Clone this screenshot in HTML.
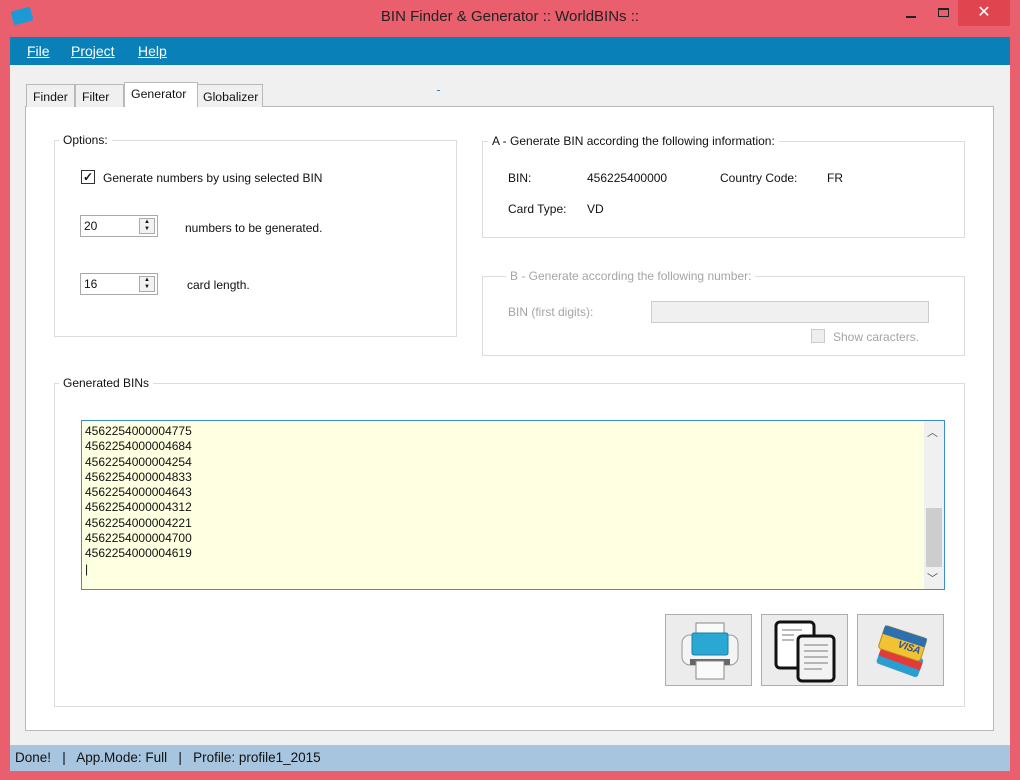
<!DOCTYPE html>
<html><head><style>
*{box-sizing:border-box;margin:0;padding:0}
body{width:1020px;height:780px;background:#e95f6d;position:relative;overflow:hidden;font-family:"Liberation Sans",sans-serif;font-size:12px;color:#111}
.a{position:absolute}
.title{left:0;top:8px;width:1020px;text-align:center;font-size:15px;color:#222}
.menu{left:10px;top:37px;width:1000px;height:28px;background:#0a80b8}
.menu span{position:absolute;top:6px;color:#fff;font-size:14px;text-decoration:underline;text-decoration-thickness:1px}
.client{left:10px;top:65px;width:1000px;height:680px;background:#f0f0f0}
.panel{left:25px;top:106px;width:969px;height:625px;background:#fff;border:1px solid #b9b9b9}
.tab{top:84px;height:23px;background:#f0f0f0;border:1px solid #b9b9b9;border-bottom:none;padding:5px 0 0 6px;font-size:12.3px}
.grp{border:1px solid #dcdcdc}
.lg{background:#fff;padding:0 4px;font-size:12px}
.spin{width:78px;height:22px;border:1px solid #a9a9a9;background:#fff;padding:3px 3px}
.spin i{position:absolute;right:2px;top:2px;width:16px;height:16px;border:1px solid #aaa;background:#f2f2f2;font-style:normal;font-size:6px;line-height:7px;text-align:center}
.btn{top:614px;width:87px;height:72px;background:#ececec;border:1px solid #adadad}
.status{left:10px;top:745px;width:1000px;height:26px;background:#a8c5e0;padding:5px 5px;font-size:13.5px}
.gray{color:#a5a5a5}
</style></head><body>
<div class="a" style="left:12px;top:9px;width:20px;height:14px;background:#1d9ad6;transform:rotate(-15deg);border-radius:2px"></div>
<div class="a title">BIN Finder &amp; Generator :: WorldBINs ::</div>
<div class="a" style="left:906px;top:16px;width:10px;height:2px;background:#222"></div>
<div class="a" style="left:938px;top:8px;width:11px;height:9px;border:1px solid #222;border-top-width:2px"></div>
<div class="a" style="left:958px;top:0;width:52px;height:26px;background:#e0454f;color:#fff;text-align:center;font-size:16px;line-height:26px">✕</div>
<div class="a menu"><span style="left:17px">File</span><span style="left:61px">Project</span><span style="left:128px">Help</span></div>
<div class="a client"></div>
<div class="a panel"></div>
<div class="a tab" style="left:26px;width:49px">Finder</div>
<div class="a tab" style="left:75px;width:49px">Filter</div>
<div class="a tab" style="left:124px;top:82px;height:25px;width:74px;background:#fff;padding-top:4px">Generator</div>
<div class="a tab" style="left:197px;width:66px;padding-left:5px">Globalizer</div>
<div class="a" style="left:437px;top:90px;width:3px;height:1px;background:#2a7fc0"></div>

<div class="a grp" style="left:54px;top:140px;width:403px;height:197px"></div>
<div class="a lg" style="left:59px;top:133px">Options:</div>
<div class="a" style="left:81px;top:170px;width:14px;height:14px;border:1px solid #333;background:#fff;font-size:12px;line-height:12px;text-align:center;font-weight:bold">✓</div>
<div class="a" style="left:103px;top:171px">Generate numbers by using selected BIN</div>
<div class="a spin" style="left:80px;top:215px">20<i>▲<br>▼</i></div>
<div class="a" style="left:185px;top:221px">numbers to be generated.</div>
<div class="a spin" style="left:80px;top:273px">16<i>▲<br>▼</i></div>
<div class="a" style="left:187px;top:278px">card length.</div>

<div class="a grp" style="left:482px;top:141px;width:483px;height:97px"></div>
<div class="a lg" style="left:488px;top:134px">A - Generate BIN according the following information:</div>
<div class="a" style="left:508px;top:171px">BIN:</div>
<div class="a" style="left:587px;top:171px">456225400000</div>
<div class="a" style="left:720px;top:171px">Country Code:</div>
<div class="a" style="left:827px;top:171px">FR</div>
<div class="a" style="left:508px;top:202px">Card Type:</div>
<div class="a" style="left:587px;top:202px">VD</div>

<div class="a grp" style="left:482px;top:276px;width:483px;height:80px"></div>
<div class="a lg gray" style="left:506px;top:269px">B - Generate according the following number:</div>
<div class="a gray" style="left:508px;top:305px">BIN (first digits):</div>
<div class="a" style="left:651px;top:301px;width:278px;height:22px;border:1px solid #ccc;background:#f0f0f0"></div>
<div class="a" style="left:811px;top:329px;width:14px;height:14px;border:1px solid #ccc;background:#eee"></div>
<div class="a gray" style="left:833px;top:330px">Show caracters.</div>

<div class="a grp" style="left:54px;top:383px;width:911px;height:324px"></div>
<div class="a lg" style="left:59px;top:376px">Generated BINs</div>
<div class="a" style="left:81px;top:420px;width:864px;height:170px;border:1px solid #3a8ecb;background:#ffffe1;padding:3px 3px;font-size:12px;line-height:15.3px">4562254000004775<br>4562254000004684<br>4562254000004254<br>4562254000004833<br>4562254000004643<br>4562254000004312<br>4562254000004221<br>4562254000004700<br>4562254000004619<br>|</div>
<div class="a" style="left:924px;top:421px;width:20px;height:168px;background:#f0f0f0"></div>
<div class="a" style="left:926px;top:508px;width:16px;height:59px;background:#cdcdcd"></div>
<div class="a" style="left:927px;top:424px;font-size:11px;color:#555">︿</div>
<div class="a" style="left:927px;top:570px;font-size:11px;color:#555">﹀</div>

<div class="a btn" style="left:665px">
<svg width="87" height="72"><rect x="30" y="8" width="28" height="16" fill="#fafafa" stroke="#888"/><rect x="16" y="20" width="56" height="30" rx="8" fill="#f4f4f4" stroke="#999"/><rect x="26" y="18" width="36" height="22" rx="2" fill="#2aa7d2" stroke="#1a7fa8"/><rect x="24" y="44" width="40" height="6" fill="#666"/><rect x="30" y="46" width="28" height="18" fill="#fafafa" stroke="#888"/></svg></div>
<div class="a btn" style="left:761px">
<svg width="87" height="72"><rect x="14" y="7" width="38" height="46" rx="4" fill="#fff" stroke="#111" stroke-width="3"/><rect x="36" y="21" width="36" height="45" rx="4" fill="#f3f3f3" stroke="#111" stroke-width="3"/><g stroke="#777" stroke-width="1"><line x1="20" y1="15" x2="40" y2="15"/><line x1="20" y1="20" x2="32" y2="20"/><line x1="20" y1="25" x2="32" y2="25"/><line x1="42" y1="30" x2="66" y2="30"/><line x1="42" y1="36" x2="66" y2="36"/><line x1="42" y1="42" x2="66" y2="42"/><line x1="42" y1="48" x2="66" y2="48"/><line x1="42" y1="54" x2="60" y2="54"/></g></svg></div>
<div class="a btn" style="left:857px">
<svg width="87" height="72"><g transform="rotate(20 43 40)"><rect x="22" y="36" width="44" height="20" rx="3" fill="#2a9ed0"/><rect x="22" y="40" width="44" height="8" fill="#e53a3a"/></g><g transform="rotate(18 43 30)"><rect x="22" y="16" width="44" height="24" rx="3" fill="#f1c232" stroke="#b78d1a"/><rect x="22" y="16" width="44" height="9" fill="#2e6fb0"/><text x="40" y="33" font-size="10" font-style="italic" font-weight="bold" fill="#2e4f9c" font-family="Liberation Sans">VISA</text></g></svg></div>

<div class="a status">Done!&nbsp;&nbsp; |&nbsp;&nbsp; App.Mode: Full&nbsp;&nbsp; |&nbsp;&nbsp; Profile: profile1_2015</div>
</body></html>
